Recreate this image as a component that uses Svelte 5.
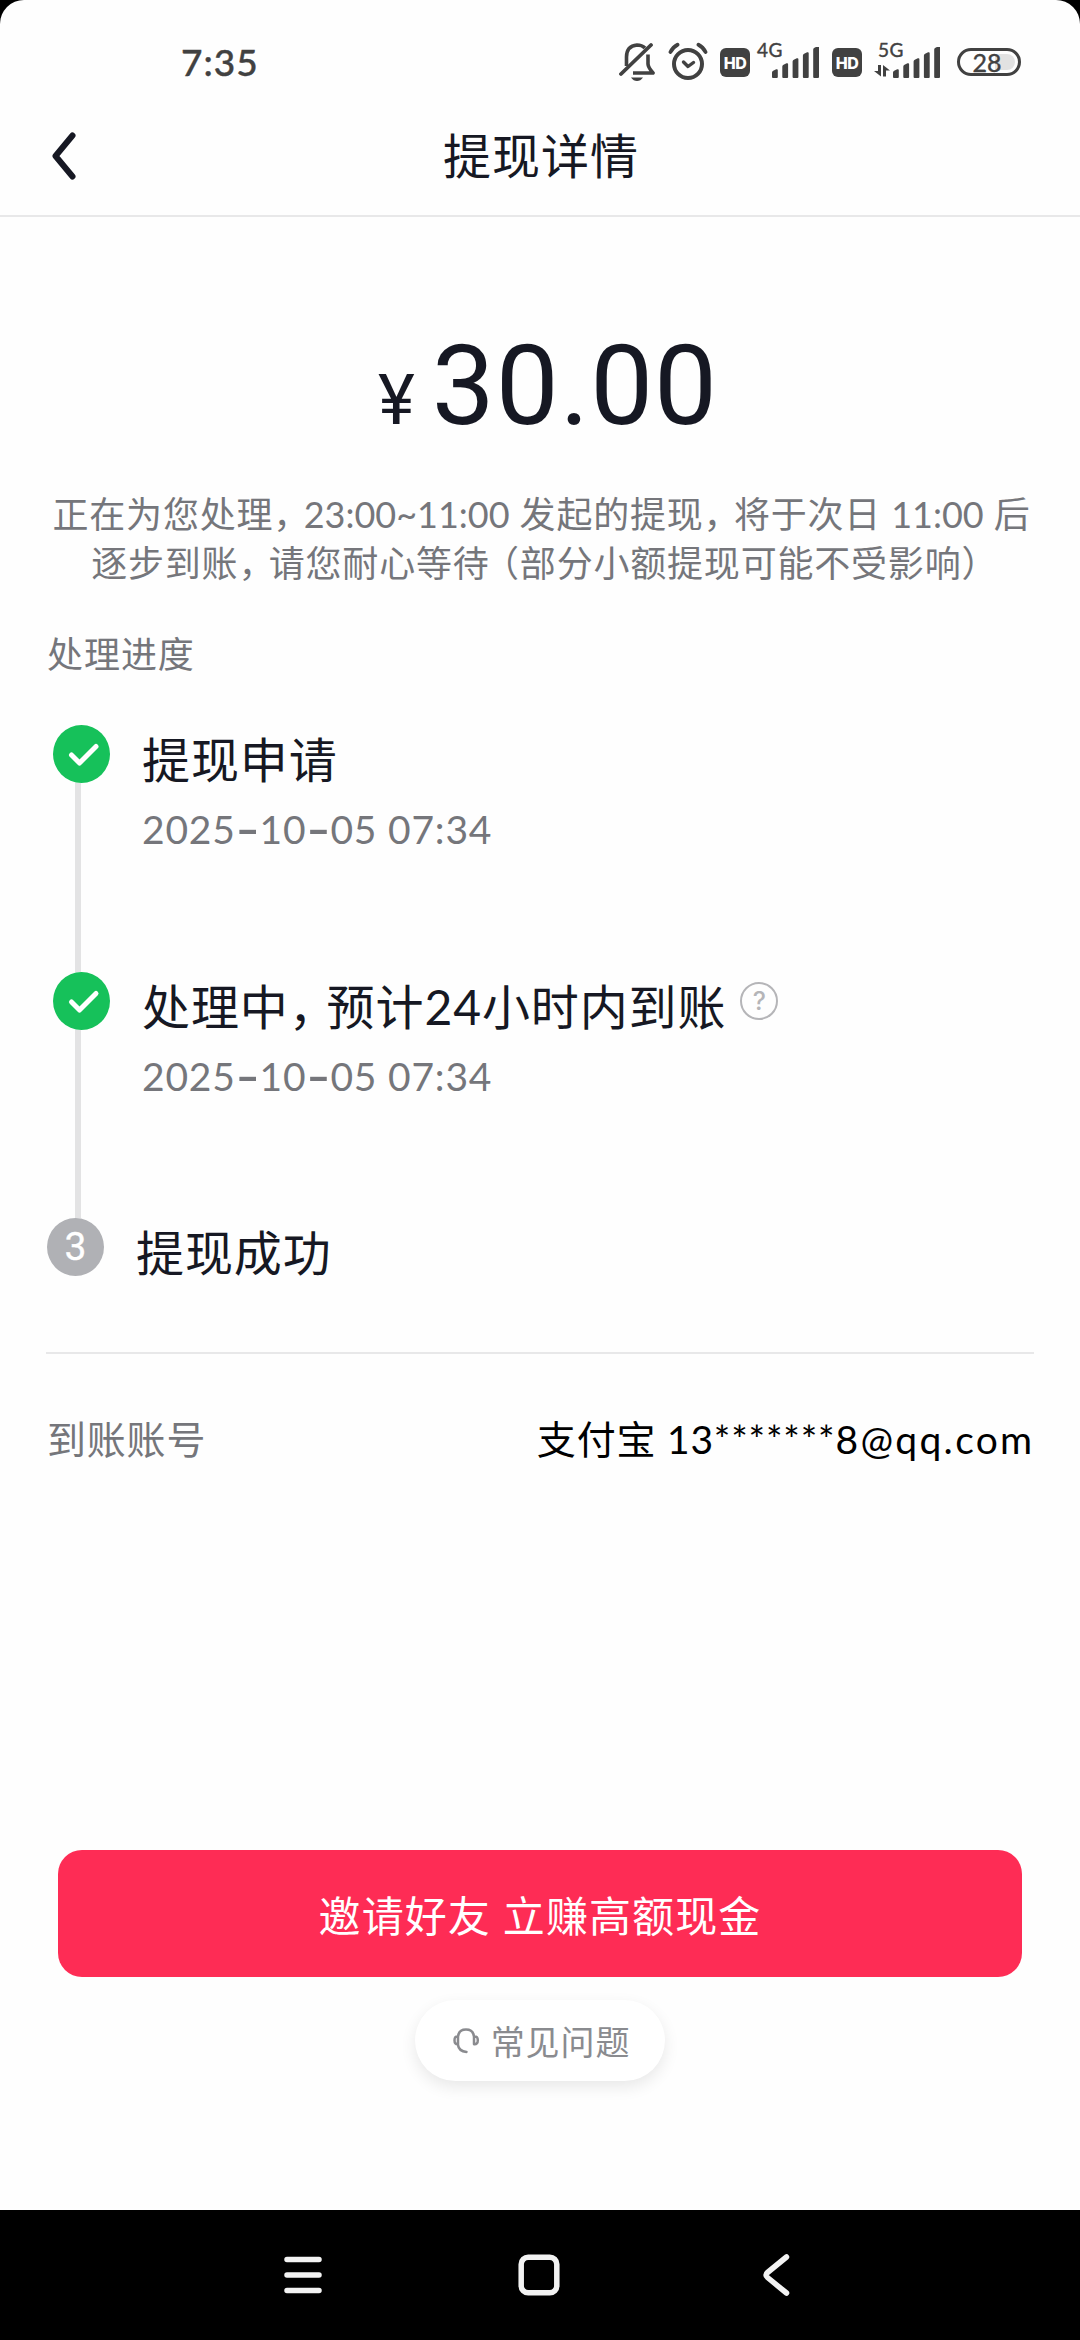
<script>
  const steps = [
    { state: 'done', title: [{ text: '提现申请' }], time: '2025-10-05 07:34' },
    {
      state: 'done',
      title: [{ text: '处理中' }, { text: '，', kind: 'comma' }, { text: '预计' }, { text: '24', kind: 'num' }, { text: '小时内到账' }],
      time: '2025-10-05 07:34',
      help: true
    },
    { state: 'todo', title: [{ text: '提现成功' }] }
  ];
  const bars = [7, 13, 18, 24, 30];
</script>

{#snippet signal()}
  <svg class="signal" width="48" height="32" viewBox="0 0 48 32">
    {#each bars as h, i}
      <path d="M{i * 10.3} 30V{32.5 - h}q0-1.2 1.2-1.7l3-1.5q1.6-.6 1.6 1V30q0 1-1 1h-3.8q-1 0-1-1z" />
    {/each}
  </svg>
{/snippet}

<div class="screen">
  <div class="page">
    <div class="status">
      <span class="clock">7:35</span>
      <div class="indicators">
        <svg width="36" height="40" viewBox="0 0 36 40" class="bell">
          <path d="M7.500 24V15q0-11 10.500-12 5 0 8 3M29 12.500V22q0 3 5 9H14" fill="none" stroke="#414141" stroke-width="3.600" stroke-linejoin="round" />
          <path d="M2 32 32 3" stroke="#414141" stroke-width="3.800" stroke-linecap="round" />
          <path d="M12 35.500h12q-2.500 3.500-6 3.500t-6-3.500z" fill="#414141" />
        </svg>
        <svg width="40" height="40" viewBox="0 0 40 40" class="alarm" stroke="#414141" stroke-linecap="round">
          <circle cx="20" cy="22" r="14" stroke-width="4" />
          <path d="M2.500 10Q5 5 9.500 2.700M37.500 10Q35 5 30.500 2.700" stroke-width="3.800" />
          <path d="m15.500 20 4.500 4.500 5.500-4" stroke-width="3.400" stroke-linejoin="round" />
        </svg>
        <span class="hd">HD</span>
        <div class="net net-a"><span class="gen">4G</span>{@render signal()}</div>
        <span class="hd">HD</span>
        <div class="net net-b">
          <span class="gen">5G</span>
          <svg class="updown" width="16" height="12" viewBox="0 0 16 12"><path d="M4 0h3v11.500L0 6h4zM9 11.500V0l7 5.500h-4v6z" /></svg>
          {@render signal()}
        </div>
        <span class="battery"><span class="level"></span><b>28</b></span>
      </div>
    </div>

    <header>
      <svg class="back" width="26" height="48" viewBox="0 0 26 48"><path d="M22.500 3.500 5.500 24l17 20.500" /></svg>
      <h1>提现详情</h1>
    </header>

    <div class="amount"><span class="yen">¥</span><span class="value">30.00</span></div>

    <div class="note">
      <p>正在为您处理<i>，</i><span class="num">23:00~11:00</span> 发起的提现<i>，</i>将于次日 <span class="num">11:00</span> 后</p>
      <p>逐步到账<i>，</i>请您耐心等待<i class="open">（</i>部分小额提现可能不受影响<i>）</i></p>
    </div>

    <h2>处理进度</h2>

    <div class="steps">
      {#each steps as step, i}
        <div class="step {step.state}">
          <div class="rail">
            <div class="dot">
              {#if step.state === 'done'}
                <svg width="58" height="58" viewBox="0 0 58 58"><path d="m18.500 30 8 8L43 21.500" /></svg>
              {:else}{i + 1}{/if}
            </div>
            {#if i < steps.length - 1}<div class="line"></div>{/if}
          </div>
          <div class="body">
            <div class="title">
              <span>{#each step.title as part}<span class={part.kind}>{part.text}</span>{/each}</span>
              {#if step.help}<span class="help">?</span>{/if}
            </div>
            {#if step.time}
              <div class="time">{#each step.time.split('-') as piece, n}{#if n}<span class="dash">-</span>{/if}{piece}{/each}</div>
            {/if}
          </div>
        </div>
      {/each}
    </div>

    <div class="account">
      <span class="label">到账账号</span>
      <span class="who">支付宝 13*******<span class="mail">8@qq.com</span></span>
    </div>

    <div class="actions">
      <button class="invite">邀请好友 立赚高额现金</button>
      <button class="faq">
        <svg width="28" height="28" viewBox="0 0 28 28"><path d="M5 9.500C5.500 5 8.500 2.500 13 2.500S20.500 5 21 9.500V17M5 9v9c.5 4 3.500 6.500 8.500 7M5 9.500Q1.500 9 1.500 13.300T5 17.200M21 9.500q3.800-.5 3.800 3.800T21 17.200" /></svg>
        <span>常见问题</span>
      </button>
    </div>
  </div>

  <nav>
    <svg width="38" height="42" viewBox="0 0 38 42"><path d="M3 5.500h32M3 21h32M3 36.500h32" /></svg>
    <svg width="42" height="42" viewBox="0 0 42 42"><rect x="3.200" y="3.200" width="35.600" height="35.600" rx="7" /></svg>
    <svg width="28" height="42" viewBox="0 0 28 42"><path d="M24.500 3 5.500 18.500q-3 2.500 0 5L24.500 39" /></svg>
  </nav>
</div>

<style>
  :global(body) { background: #000; }
  .screen {
    width: 1080px; height: 2340px; display: flex; flex-direction: column; overflow: hidden;
    background: #000; color: #161823;
    font-family: Lato, "Noto Sans CJK SC", sans-serif;
  }
  .page {
    height: 2210px; background: #fefefe; border-radius: 24px 24px 0 0;
    display: flex; flex-direction: column; flex: none;
  }
  h1, h2, p { margin: 0; font-weight: 400; }
  i, b { font-style: normal; font-weight: 400; }
  button { border: 0; padding: 0; font-family: inherit; }

  .status { height: 96px; padding-left: 181px; display: flex; align-items: flex-start; color: #414141; flex: none; }
  .clock { width: 438px; line-height: 40px; padding-top: 42px; font-size: 37px; font-weight: 500; letter-spacing: 1px; -webkit-text-stroke: .4px #414141; }
  .indicators { display: flex; align-items: flex-start; padding-top: 42px; }
  .indicators svg { fill: #414141; flex: none; }
  .indicators .alarm { margin-left: 13px; fill: none; }
  .hd {
    width: 30px; height: 29px; margin: 6px 0 0 12px; border-radius: 6px; background: #414141; color: #fff;
    font: 800 16px/30px Inter, sans-serif; text-align: center; letter-spacing: -.5px; flex: none;
  }
  .net { display: flex; align-items: flex-end; position: relative; height: 37px; flex: none; }
  .net .gen { position: absolute; top: -1px; font: 400 19px/18px Lato, sans-serif; letter-spacing: .5px; -webkit-text-stroke: .4px #414141; }
  .net-a { padding-left: 22px; }
  .net-a .gen { left: 7px; }
  .net-b { margin-left: 12px; gap: 3px; }
  .net-b .gen { left: 4px; }
  .updown { margin-bottom: 2px; }
  .battery {
    position: relative; width: 58px; height: 22px; margin: 6px 0 0 16px; border: 3px solid #414141; border-radius: 15px;
    font-size: 25px; line-height: 22px; text-align: center; flex: none;
  }
  .battery b { position: relative; left: -2px; -webkit-text-stroke: .4px #414141; }
  .level { position: absolute; right: 3px; top: 3px; width: 20px; height: 16px; border-radius: 0 8px 8px 0; background: #e2e2e2; }

  header { height: 119px; display: flex; align-items: center; border-bottom: 2px solid #e8e8e9; flex: none; }
  .back { width: 26px; margin-left: 50px; fill: none; stroke: #161823; stroke-width: 6; stroke-linecap: round; stroke-linejoin: round; }
  h1 { flex: 1; margin-right: 74px; text-align: center; font-size: 48px; letter-spacing: 1px; line-height: 60px; padding-top: 1px; }

  .amount {
    height: 273px; display: flex; align-items: baseline; justify-content: center; flex: none;
    font-family: Roboto, sans-serif; line-height: 200px; padding: 69px 0 0 16px; box-sizing: border-box;
  }
  .yen { font-size: 70px; margin-right: 17px; }
  .value { font-size: 112px; letter-spacing: 1px; }

  .note { height: 98px; padding-left: 3px; color: #75767b; font-size: 36px; line-height: 49px; letter-spacing: .8px; text-align: center; white-space: nowrap; flex: none; }
  .note i { font-feature-settings: "halt"; padding-right: 11.500px; }
  .note .open { padding: 0 0 0 11.500px; }
  .note .num { letter-spacing: 0; }

  h2 { margin: 42px 0 0 47px; font-size: 36px; line-height: 48px; letter-spacing: .95px; color: #75767b; flex: none; }

  .steps { margin: 47px 46px 0; height: 627px; border-bottom: 2px solid #e8e8e9; flex: none; }
  .step { height: 246.500px; display: flex; padding-left: 7px; }
  .rail { width: 57px; display: flex; flex-direction: column; }
  .dot { width: 57px; height: 58px; border-radius: 50%; flex: none; }
  .done .dot { background: #16c15a; }
  .dot svg { display: block; fill: none; stroke: #fff; stroke-width: 5; stroke-linecap: round; stroke-linejoin: round; }
  .line { flex: 1; width: 6px; margin-left: 22px; background: #e3e3e4; }
  .todo { padding-left: 1px; }
  .todo .dot { background: #b0b1b5; color: #fff; font: 400 39px/59px Roboto, sans-serif; text-align: center; -webkit-text-stroke: .3px #fff; }
  .body { margin-left: 32px; }
  .title { display: flex; height: 69px; align-items: center; font-size: 48px; letter-spacing: .9px; line-height: 69px; white-space: nowrap; }
  .comma { font-feature-settings: "halt"; padding-right: 13px; }
  .time { margin-top: 10px; font-size: 39px; line-height: 50px; letter-spacing: .8px; color: #75767b; }
  .dash { font: 400 52px/0 Inter, sans-serif; letter-spacing: 0; vertical-align: -4px; }
  .help {
    width: 38px; height: 38px; margin: -10px 0 0 14px; border: 2.500px solid #b5b5b8; border-radius: 50%; box-sizing: border-box;
    text-align: center; font: 500 25px/34px Inter, sans-serif; color: #b5b5b8; letter-spacing: 0;
  }

  .account { height: 166px; padding: 0 47px; display: flex; justify-content: space-between; align-items: center; font-size: 39px; letter-spacing: .8px; white-space: nowrap; flex: none; }
  .label { color: #75767b; }
  .who { color: #000; }
  .mail { letter-spacing: 2.300px; margin-right: -1.500px; }

  .actions { margin-top: auto; display: flex; flex-direction: column; align-items: center; padding-bottom: 129px; }
  .invite { width: 964px; height: 127px; border-radius: 24px; background: #fe2c55; color: #fff; font-size: 42px; letter-spacing: 1.100px; }
  .faq {
    width: 250px; height: 81px; margin-top: 23px; border-radius: 41px; background: #fff; color: #8a8b8f;
    display: flex; align-items: center; justify-content: center; gap: 10px; font-size: 34px; letter-spacing: .9px; padding-left: 3px; box-sizing: border-box;
    box-shadow: 0 6px 16px rgba(0, 0, 0, .09);
  }
  .faq svg { fill: none; stroke: #8a8b8f; stroke-width: 2.500; stroke-linecap: round; }

  nav { height: 130px; display: flex; align-items: center; padding-left: 284px; }
  nav svg { fill: none; stroke: #f3f3f3; stroke-width: 5.500; stroke-linecap: round; margin-right: 196px; flex: none; }
  nav svg + svg { margin-right: 202px; }
</style>
